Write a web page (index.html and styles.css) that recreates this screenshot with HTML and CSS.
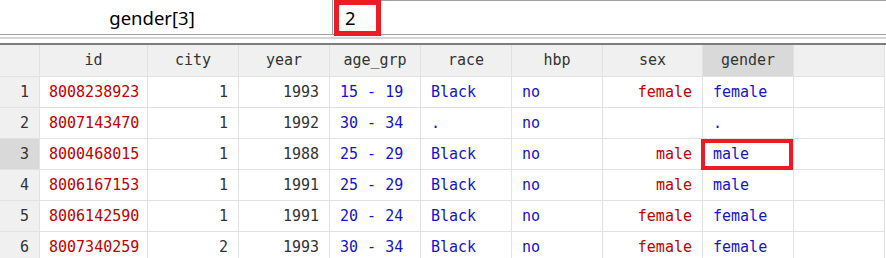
FILE: index.html
```html
<!DOCTYPE html>
<html lang="en">
<head>
  <meta charset="UTF-8">
  <meta name="viewport" content="width=device-width, initial-scale=1.0">
  <title>Data Editor</title>
  <link rel="stylesheet" href="styles.css">
</head>
<body>
  <div class="topbar">
    <div class="varname">gender[3]</div>
    <div class="value">2</div>
    <div class="mark mark-value"></div>
  </div>
  <div class="splitter"></div>

  <div class="grid">
    <div class="cell head rownum"></div>
    <div class="cell head">id</div>
    <div class="cell head">city</div>
    <div class="cell head">year</div>
    <div class="cell head">age_grp</div>
    <div class="cell head">race</div>
    <div class="cell head">hbp</div>
    <div class="cell head">sex</div>
    <div class="cell head selected">gender</div>
    <div class="cell head filler"></div>

    <div class="cell rownum">1</div>
    <div class="cell str">8008238923</div>
    <div class="cell num">1</div>
    <div class="cell num">1993</div>
    <div class="cell lbl">15 - 19</div>
    <div class="cell lbl">Black</div>
    <div class="cell lbl">no</div>
    <div class="cell str right">female</div>
    <div class="cell lbl">female</div>
    <div class="cell filler"></div>

    <div class="cell rownum">2</div>
    <div class="cell str">8007143470</div>
    <div class="cell num">1</div>
    <div class="cell num">1992</div>
    <div class="cell lbl">30 - 34</div>
    <div class="cell lbl">.</div>
    <div class="cell lbl">no</div>
    <div class="cell str right"></div>
    <div class="cell lbl">.</div>
    <div class="cell filler"></div>

    <div class="cell rownum selected">3</div>
    <div class="cell str">8000468015</div>
    <div class="cell num">1</div>
    <div class="cell num">1988</div>
    <div class="cell lbl">25 - 29</div>
    <div class="cell lbl">Black</div>
    <div class="cell lbl">no</div>
    <div class="cell str right">male</div>
    <div class="cell lbl marked">male</div>
    <div class="cell filler"></div>

    <div class="cell rownum">4</div>
    <div class="cell str">8006167153</div>
    <div class="cell num">1</div>
    <div class="cell num">1991</div>
    <div class="cell lbl">25 - 29</div>
    <div class="cell lbl">Black</div>
    <div class="cell lbl">no</div>
    <div class="cell str right">male</div>
    <div class="cell lbl">male</div>
    <div class="cell filler"></div>

    <div class="cell rownum">5</div>
    <div class="cell str">8006142590</div>
    <div class="cell num">1</div>
    <div class="cell num">1991</div>
    <div class="cell lbl">20 - 24</div>
    <div class="cell lbl">Black</div>
    <div class="cell lbl">no</div>
    <div class="cell str right">female</div>
    <div class="cell lbl">female</div>
    <div class="cell filler"></div>

    <div class="cell rownum">6</div>
    <div class="cell str">8007340259</div>
    <div class="cell num">2</div>
    <div class="cell num">1993</div>
    <div class="cell lbl">30 - 34</div>
    <div class="cell lbl">Black</div>
    <div class="cell lbl">no</div>
    <div class="cell str right">female</div>
    <div class="cell lbl">female</div>
    <div class="cell filler"></div>
  </div>
</body>
</html>
```

FILE: styles.css
```css
* {
  box-sizing: border-box;
}

body {
  margin: 0;
  background-color: #fff;
  overflow: hidden;
}

/* variable / value bar */
.topbar {
  position: relative;
  display: flex;
  height: 35px;
  border-bottom: 1px solid #a0a0a0;
  font-family: 'Noto Sans', sans-serif;
  font-size: 18.5px;
  color: #000;
}

.varname {
  width: 333px;
  border-right: 1px solid #a0a0a0;
  padding-right: 28px;
  text-align: center;
  line-height: 35px;
}

.value {
  flex: 1;
  margin-left: 1px;
  border-top: 1px solid #a0a0a0;
  padding-left: 11px;
  line-height: 33px;
}

.mark {
  position: absolute;
  border: 5px solid #ed1c24;
}

.mark-value {
  left: 334px;
  top: 0;
  width: 47px;
  height: 36px;
}

.splitter {
  height: 4px;
  border-bottom: 2px solid #d4d4d4;
  margin-bottom: 4px;
}

/* data grid */
.grid {
  display: grid;
  grid-template-columns: 40px 108px 91px 91px 91px 91px 91px 100px 91px 91px;
  grid-template-rows: 32px;
  grid-auto-rows: 31px;
  border-top: 2px solid #7c7c7c;
  font-family: 'DejaVu Sans Mono', monospace;
  font-size: 15px;
}

.cell {
  position: relative;
  border-right: 1px solid #e2e2e2;
  border-bottom: 1px solid #e2e2e2;
  padding: 0 10px 0 9px;
  line-height: 30px;
  white-space: nowrap;
  overflow: hidden;
}

.head {
  background-color: #f0f0f0;
  color: #333;
  text-align: center;
  padding: 0;
}

.rownum {
  background-color: #f0f0f0;
  color: #333;
  text-align: right;
  padding-right: 10px;
}

.selected {
  background-color: #d9d9d9;
}

.str {
  color: #c00000;
}

.num {
  color: #333;
  text-align: right;
}

.lbl {
  color: #1414c8;
  padding-left: 10px;
}

.right {
  text-align: right;
}

.filler {
  padding: 0;
}

.marked {
  overflow: visible;
}

.marked::after {
  content: "";
  position: absolute;
  left: -2px;
  top: 0;
  right: 0;
  bottom: -1px;
  border: 4px solid #ed1c24;
}
```
